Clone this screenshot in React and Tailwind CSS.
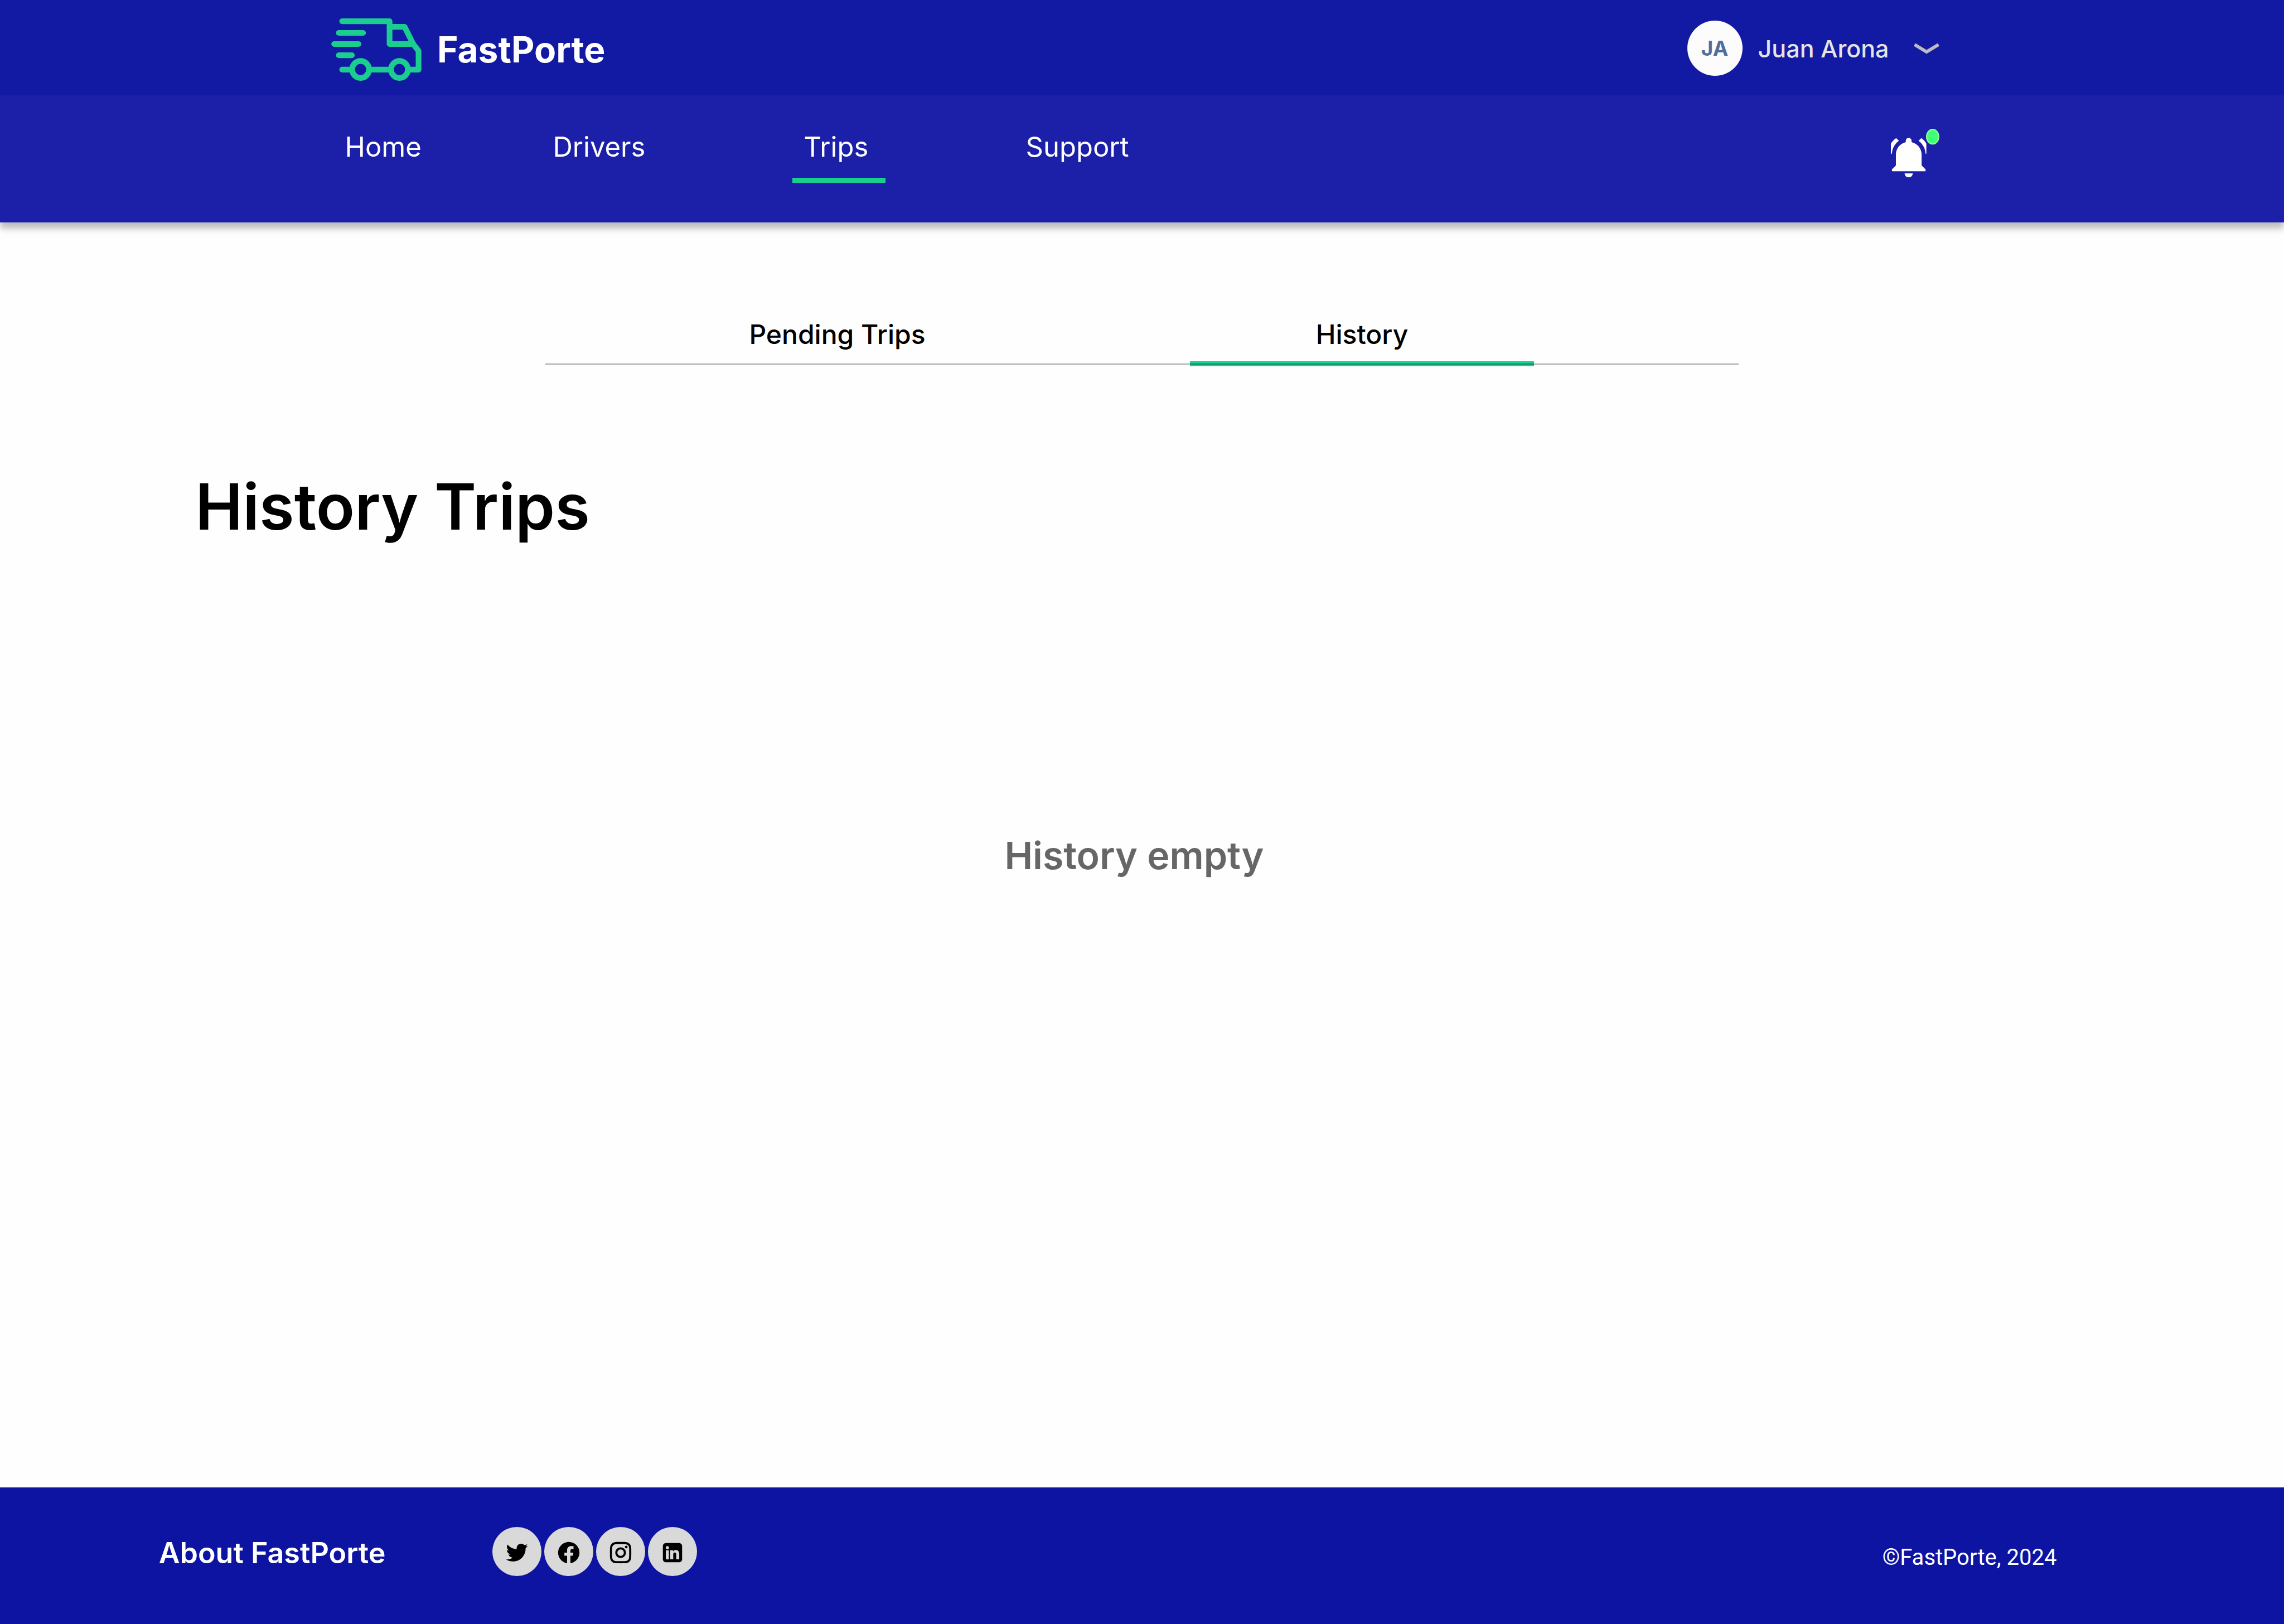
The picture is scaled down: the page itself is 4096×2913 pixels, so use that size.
import React from "react";
import { RiTwitterFill, RiFacebookCircleFill, RiInstagramLine } from "react-icons/ri";

function TruckLogo() {
  return (
    <svg
      viewBox="48 51 684 474"
      className="h-[112px] w-[162px] shrink-0"
      fill="none"
      stroke="#1bcd8f"
      strokeWidth="43"
      strokeLinecap="round"
      strokeLinejoin="round"
      aria-hidden="true"
    >
      <path d="M130 72.500H490V245H670" />
      <path d="M490 115H604L669 245L710 298V439.500H640" />
      <path d="M104.500 161H289M69.500 245.500H254M104.500 331H204" />
      <path d="M130 439.500H200M340 439.500H495" />
      <circle cx="270" cy="438.500" r="64.500" />
      <circle cx="565" cy="438.500" r="64.500" />
    </svg>
  );
}

function BellIcon() {
  return (
    <svg viewBox="58 42 368 368" className="size-[87px]" aria-hidden="true">
      <g fill="#fff">
        <path d="M96 237C96 190 128 153 171 143V133A22 22 0 0 1 215 133V143C259 153 291 190 291 237V320L321 350V365H66V350L96 320Z" />
        <path d="M162 380H224C223 398 210 410 193 410S163 398 162 380Z" />
        <path d="M98 113L119 133C88 156 68 190 66 231H58V155C68 138 82 125 98 113Z" />
        <path d="M289 113L268 133C299 156 319 190 321 231H327V155C319 138 305 125 289 113Z" />
      </g>
      <ellipse cx="375" cy="102" rx="46" ry="55.500" fill="#3eff75" stroke="#92ff8f" strokeWidth="9" />
    </svg>
  );
}

function LinkedinIcon({ className }) {
  return (
    <svg viewBox="0 0 24 24" className={className} aria-hidden="true">
      <rect x="3" y="3" width="18" height="18" rx="2.800" fill="#000" />
      <g fill="#d9d9d9">
        <circle cx="7.200" cy="7.400" r="1.500" />
        <path d="M5.800 9.800H8.600V18.300H5.800Z" />
        <path d="M9.900 9.800H12.600V10.900C13.100 10 14 9.500 15.100 9.500C17.400 9.500 18.300 11.100 18.300 13.400V18.300H15.500V13.800C15.500 12.700 15.100 11.900 14.100 11.900C13 11.900 12.700 12.700 12.700 13.800V18.300H9.900Z" />
      </g>
    </svg>
  );
}

function Header() {
  return (
    <header className="relative z-10 shadow-[0_11px_11px_rgba(0,0,0,0.25)]">
      <div className="flex h-[171px] items-center justify-between bg-[#121aa3] pt-0.5 pr-[15.1%] pl-[14.5%]">
        <a href="#home" className="flex items-center gap-7 pt-1">
          <TruckLogo />
          <span className="text-[64px] leading-[76px] font-bold text-white">FastPorte</span>
        </a>
        <button type="button" className="flex items-center gap-7">
          <span className="flex size-[99px] items-center justify-center rounded-full bg-[#fcfcfc] text-[37px] leading-[44px] font-bold text-[#516e9f]">
            JA
          </span>
          <span className="text-[43px] leading-[52px] font-medium text-[#e4e4e4]">Juan Arona</span>
          <svg viewBox="0 0 46 20" className="ml-4 h-5 w-[46px]" fill="none" stroke="#bdbdbd" strokeWidth="6" aria-hidden="true">
            <path d="M1.500 3L23 16L44.500 3" />
          </svg>
        </button>
      </div>
      <div className="flex h-[228px] items-start justify-between bg-[#1c20a8] pt-[60px] pr-[15.1%] pl-[15.1%]">
        <nav className="grid grid-cols-[373px_430px_418px_auto] text-[49px] leading-[66px] text-white">
          <a href="#home">Home</a>
          <a href="#drivers">Drivers</a>
          <a href="#trips" aria-current="page" className="w-[167px] border-b-[9px] border-[#1bcd8f] pb-[22px] pl-5">
            Trips
          </a>
          <a href="#support">Support</a>
        </nav>
        <button type="button" aria-label="Notifications">
          <BellIcon />
        </button>
      </div>
    </header>
  );
}

function Tabs() {
  return (
    <div
      role="tablist"
      className="relative mx-auto grid w-[52.25%] grid-cols-[215fr_617fr_324fr_617fr_367fr] text-[48px] leading-[66px] font-medium text-black"
    >
      <button type="button" role="tab" aria-selected="false" className="col-start-2 h-[90px] pb-6">
        Pending Trips
      </button>
      <button
        type="button"
        role="tab"
        aria-selected="true"
        className="col-start-4 h-[90px] border-b-[9px] border-[#1bcd8f] pb-[15px]"
      >
        History
      </button>
      <div className="absolute inset-x-0 bottom-[3px] h-0.5 bg-black/35" />
    </div>
  );
}

const socials = [
  { label: "Twitter", Icon: RiTwitterFill },
  { label: "Facebook", Icon: RiFacebookCircleFill },
  { label: "Instagram", Icon: RiInstagramLine },
  { label: "LinkedIn", Icon: LinkedinIcon },
];

function Footer() {
  return (
    <footer className="flex h-[245px] items-start bg-[#0d14a2] pt-[71px] pr-[9.95%] pl-[6.95%] text-white">
      <a href="#about" className="text-[52px] leading-[94px] font-semibold">
        About FastPorte
      </a>
      <div className="ml-48 flex gap-[5px]">
        {socials.map(({ label, Icon }) => (
          <a
            key={label}
            href={"#" + label.toLowerCase()}
            aria-label={label}
            className="flex size-[88px] items-center justify-center rounded-full bg-[#d9d9d9] pt-[3px] text-black"
          >
            <Icon className="size-[46px]" />
          </a>
        ))}
      </div>
      <p className="ml-auto font-['Roboto',sans-serif] text-[40px] leading-[109px]">©FastPorte, 2024</p>
    </footer>
  );
}

export default function App() {
  return (
    <div className="flex min-h-screen w-full flex-col bg-[#fefefe] font-['Inter',sans-serif]">
      <Header />
      <main className="flex-1 pt-[168px]">
        <Tabs />
        <h1 className="mt-[183px] pl-[8.55%] text-[114px] leading-[138px] font-semibold text-black">History Trips</h1>
        <p className="mt-[515px] pr-7 text-center text-[68px] leading-[82px] font-semibold text-[#666]">History empty</p>
      </main>
      <Footer />
    </div>
  );
}
